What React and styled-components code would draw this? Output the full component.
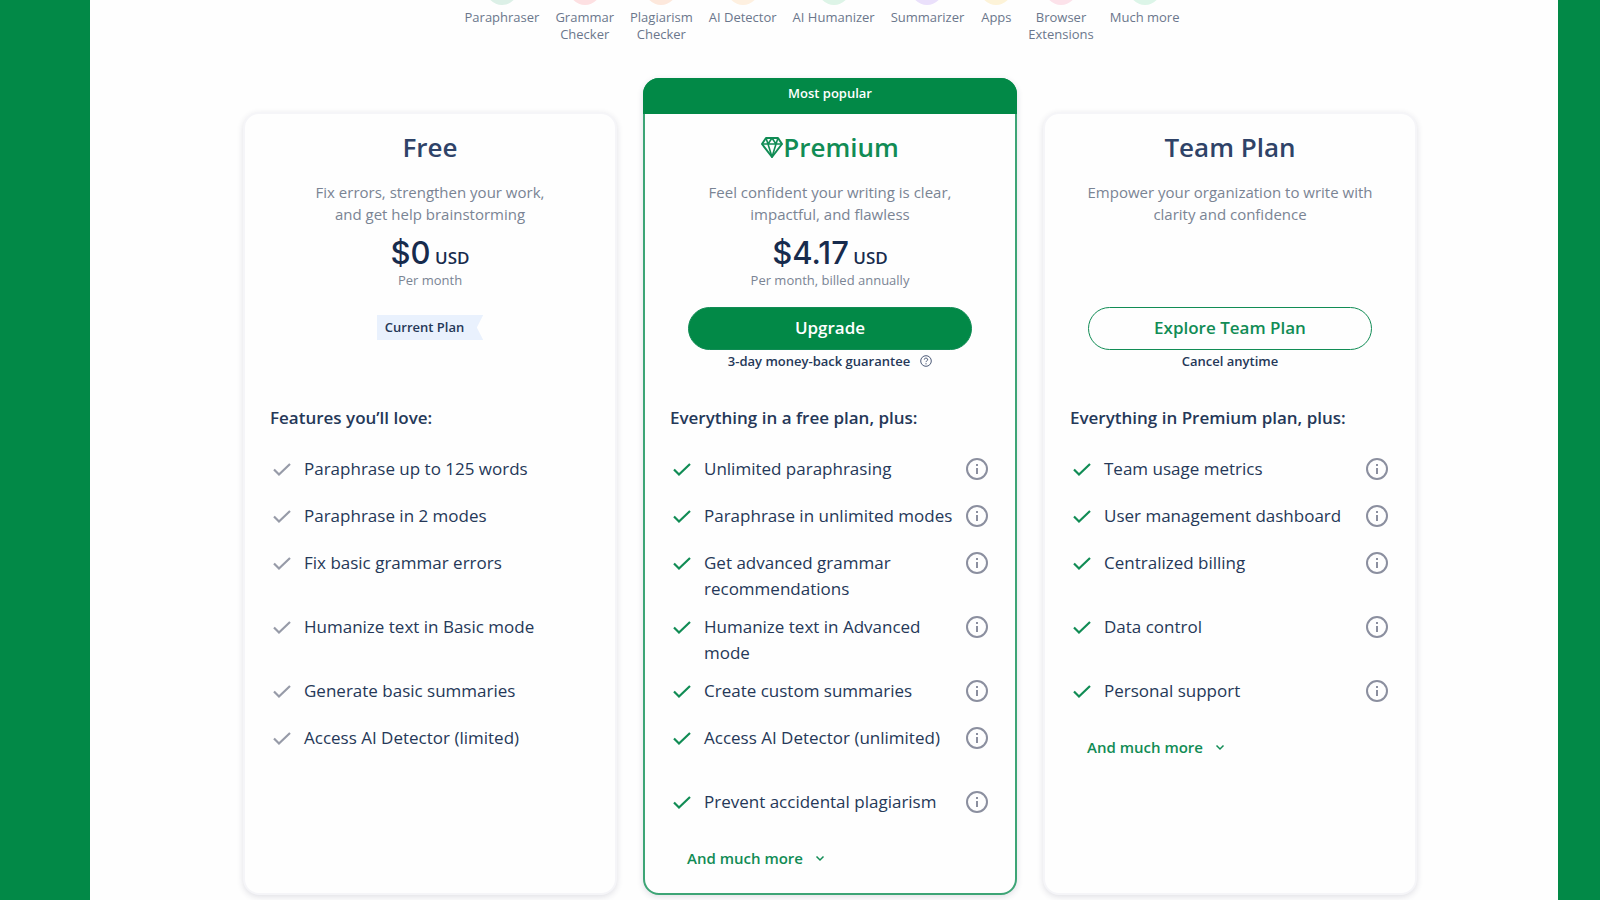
import React from "react";
import styled, { createGlobalStyle } from "styled-components";

const GlobalStyle = createGlobalStyle`
  * {
    box-sizing: border-box;
  }
  body {
    margin: 0;
    background-color: #028947;
    font-family: "Open Sans", "Noto Sans", sans-serif;
    color: #253858;
  }
`;

//layout
const Page = styled.main`
  min-height: 100vh;
  margin: 0 42px 0 90px;
  padding-bottom: 5px;
  background-color: #fefefe;
  overflow: hidden;
`;

const Plans = styled.section`
  display: grid;
  grid-template-columns: repeat(3, minmax(0, 1fr));
  gap: 26px;
  padding: 35px 141px 0 153px;
`;

//tools
const ToolList = styled.ul`
  display: flex;
  justify-content: center;
  gap: 16px;
  margin: -27px 0 0;
  padding: 0 4px 0 0;
  list-style: none;
`;

const Tool = styled.li`
  display: flex;
  flex-direction: column;
  align-items: center;
  max-width: 84px;
  font-size: 13px;
  line-height: 17px;
  text-align: center;
  white-space: pre-line;
  color: #6b778c;
`;

const ToolDot = styled.span`
  width: 32px;
  height: 32px;
  margin-bottom: 4px;
  border-radius: 50%;
  background-color: ${(props) => props.$color};
`;

//cards
const Card = styled.article`
  display: flex;
  flex-direction: column;
  margin-top: ${(props) => (props.$popular ? "0" : "34px")};
  border: 2px solid ${(props) => (props.$popular ? "#3da576" : "#f5f5f8")};
  border-radius: 16px;
  background-color: #fefefe;
  box-shadow: 0 2px 6px rgba(40, 40, 80, 0.14);
`;

const Ribbon = styled.div`
  height: 36px;
  margin: -2px -2px 0;
  padding-top: 6px;
  border-radius: 16px 16px 0 0;
  font-size: 13px;
  font-weight: 600;
  line-height: 18px;
  text-align: center;
  color: white;
  background-color: #028947;
`;

const Summary = styled.header`
  display: flex;
  flex-direction: column;
  align-items: center;
  height: 273px;
  padding: 16px 30px 0;
  text-align: center;
`;

const Title = styled.h2`
  display: flex;
  align-items: center;
  margin: 0;
  font-size: 26px;
  font-weight: 600;
  line-height: 34px;
  color: ${(props) => (props.$popular ? "#118c55" : "#2f4368")};
`;

const Description = styled.p`
  height: 44px;
  margin: 17px 0 0;
  font-size: 15px;
  line-height: 22px;
  white-space: pre-line;
  color: #7a8494;
`;

const PriceBox = styled.div`
  height: 82px;
  padding-top: 10px;
`;

const Price = styled.p`
  margin: 0;
  font-family: Inter, sans-serif;
  font-size: 31px;
  font-weight: 500;
  line-height: 36px;
  color: #172b4d;
`;

const Currency = styled.span`
  font-family: "Open Sans", sans-serif;
  font-size: 17px;
  font-weight: 600;
  line-height: 17px;
`;

const Billing = styled.p`
  margin: 0;
  font-size: 13px;
  line-height: 18px;
  color: #7a8494;
`;

const PlanButton = styled.button`
  width: calc(100% - 26px);
  height: 43px;
  padding: 0 0 2px;
  border: 1px solid #118c55;
  border-radius: 22px;
  font-family: inherit;
  font-size: 17px;
  font-weight: 600;
  color: ${(props) => (props.$filled ? "white" : "#118c55")};
  background-color: ${(props) => (props.$filled ? "#028947" : "transparent")};
  cursor: pointer;
`;

const CurrentPlan = styled.span`
  margin-top: 8px;
  padding: 0 19px 0 8px;
  font-size: 13px;
  font-weight: 600;
  line-height: 25px;
  background-color: #e9f1fd;
  clip-path: polygon(0 0, 100% 0, 94% 50%, 100% 100%, 0 100%);
`;

const Note = styled.p`
  display: flex;
  align-items: center;
  gap: 10px;
  margin: 2px 0 0;
  font-size: 13px;
  font-weight: 600;
  line-height: 18px;
`;

//features
const Features = styled.div`
  padding: 18px 27px 24px 25px;
`;

const FeaturesTitle = styled.h3`
  margin: 0 0 16px;
  font-size: 17px;
  font-weight: 600;
  line-height: 25px;
`;

const FeatureList = styled.ul`
  margin: 0;
  padding: 10px 0 0;
  list-style: none;
`;

const Feature = styled.li`
  display: flex;
  align-items: flex-start;
  min-height: ${(props) => (props.$tall ? "64px" : "47px")};
  font-size: 17px;
  line-height: 26px;
`;

const FeatureText = styled.span`
  flex: 1;
`;

const CheckIcon = styled.svg`
  width: 18px;
  height: 26px;
  margin: 0 13px 0 3px;
  fill: none;
  stroke: ${(props) => (props.$muted ? "#979ba8" : "#118c55")};
  stroke-width: 2.2;
`;

const InfoButton = styled.button`
  display: flex;
  align-items: center;
  height: 26px;
  padding: 0;
  border: none;
  background: none;
  cursor: pointer;
`;

const MoreButton = styled.button`
  display: flex;
  align-items: center;
  gap: 12px;
  margin: 11px 0 0 17px;
  padding: 0;
  border: none;
  font-family: inherit;
  font-size: 15px;
  font-weight: 600;
  line-height: 22px;
  color: #118c55;
  background: none;
  cursor: pointer;
`;

//icons
const Gem = () => (
  <svg width="22" height="22" viewBox="0 0 22 22" fill="none" stroke="#118c55" strokeWidth="2" strokeLinejoin="round" aria-hidden="true">
    <path d="M5 2h12l4 6-10 13L1 8z" />
    <path d="M1 8h20M5 2l2 6 4 13 4-13 2-6M7 8l4-6 4 6" strokeWidth="1.600" />
  </svg>
);

const Check = ({ muted }) => (
  <CheckIcon viewBox="0 0 18 26" $muted={muted} aria-hidden="true">
    <path d="M1 13.500l5 5L17 8" />
  </CheckIcon>
);

const Info = () => (
  <svg width="22" height="22" viewBox="0 0 22 22" fill="none" stroke="#8b8f9f" aria-hidden="true">
    <circle cx="11" cy="11" r="10" strokeWidth="2" />
    <path d="M11 10v6M11 6v2" strokeWidth="2" />
  </svg>
);

const Question = () => (
  <svg width="12" height="12" viewBox="0 0 12 12" fill="none" stroke="#4d5b78" aria-hidden="true">
    <circle cx="6" cy="6" r="5.300" />
    <path d="M4.300 4.600a1.700 1.500 0 1 1 2.500 1.300q-.8.400-.8 1.200M6 8.200v1.200" />
  </svg>
);

const Chevron = () => (
  <svg width="10" height="10" viewBox="0 0 10 10" fill="none" stroke="#118c55" strokeWidth="1.500" aria-hidden="true">
    <path d="M1.500 3.500L5 7l3.500-3.500" />
  </svg>
);

const tools = [
  { name: "Paraphraser", color: "#dcf0e7" },
  { name: "Grammar\nChecker", color: "#fde0e2" },
  { name: "Plagiarism\nChecker", color: "#fde8dc" },
  { name: "AI Detector", color: "#fef0e0" },
  { name: "AI Humanizer", color: "#ddf4e7" },
  { name: "Summarizer", color: "#eae0fb" },
  { name: "Apps", color: "#fdf3d8" },
  { name: "Browser\nExtensions", color: "#fce2ea" },
  { name: "Much more", color: "#dcf5e8" },
];

const plans = [
  {
    name: "Free",
    description: "Fix errors, strengthen your work,\nand get help brainstorming",
    price: "$0",
    billing: "Per month",
    heading: "Features you’ll love:",
    features: [
      "Paraphrase up to 125 words",
      "Paraphrase in 2 modes",
      "Fix basic grammar errors",
      "Humanize text in Basic mode",
      "Generate basic summaries",
      "Access AI Detector (limited)",
    ],
  },
  {
    name: "Premium",
    popular: true,
    description: "Feel confident your writing is clear,\nimpactful, and flawless",
    price: "$4.17",
    billing: "Per month, billed annually",
    action: "Upgrade",
    note: "3-day money-back guarantee",
    heading: "Everything in a free plan, plus:",
    features: [
      "Unlimited paraphrasing",
      "Paraphrase in unlimited modes",
      "Get advanced grammar recommendations",
      "Humanize text in Advanced mode",
      "Create custom summaries",
      "Access AI Detector (unlimited)",
      "Prevent accidental plagiarism",
    ],
    more: true,
  },
  {
    name: "Team Plan",
    description: "Empower your organization to write with\nclarity and confidence",
    action: "Explore Team Plan",
    note: "Cancel anytime",
    heading: "Everything in Premium plan, plus:",
    features: [
      "Team usage metrics",
      "User management dashboard",
      "Centralized billing",
      "Data control",
      "Personal support",
    ],
    more: true,
  },
];

// rows line up across the three cards, so these are tall in each of them
const tallRows = [2, 3, 5];

const Plan = ({ plan }) => (
  <Card $popular={plan.popular}>
    {plan.popular && <Ribbon>Most popular</Ribbon>}
    <Summary>
      <Title $popular={plan.popular}>
        {plan.popular && <Gem />}
        {plan.name}
      </Title>
      <Description>{plan.description}</Description>
      <PriceBox>
        {plan.price && (
          <Price>
            {plan.price}
            <Currency> USD</Currency>
          </Price>
        )}
        {plan.billing && <Billing>{plan.billing}</Billing>}
      </PriceBox>
      {plan.action ? (
        <PlanButton type="button" $filled={plan.popular}>
          {plan.action}
        </PlanButton>
      ) : (
        <CurrentPlan>Current Plan</CurrentPlan>
      )}
      {plan.note && (
        <Note>
          {plan.note}
          {plan.popular && <Question />}
        </Note>
      )}
    </Summary>
    <Features>
      <FeaturesTitle>{plan.heading}</FeaturesTitle>
      <FeatureList>
        {plan.features.map((feature, index) => (
          <Feature key={feature} $tall={tallRows.includes(index)}>
            <Check muted={!plan.action} />
            <FeatureText>{feature}</FeatureText>
            {plan.action && (
              <InfoButton type="button" aria-label={`About ${feature}`}>
                <Info />
              </InfoButton>
            )}
          </Feature>
        ))}
      </FeatureList>
      {plan.more && (
        <MoreButton type="button">
          And much more
          <Chevron />
        </MoreButton>
      )}
    </Features>
  </Card>
);

const App = () => (
  <>
    <GlobalStyle />
    <Page>
      <ToolList>
        {tools.map((tool) => (
          <Tool key={tool.name}>
            <ToolDot $color={tool.color} />
            {tool.name}
          </Tool>
        ))}
      </ToolList>
      <Plans>
        {plans.map((plan) => (
          <Plan key={plan.name} plan={plan} />
        ))}
      </Plans>
    </Page>
  </>
);

export default App;
